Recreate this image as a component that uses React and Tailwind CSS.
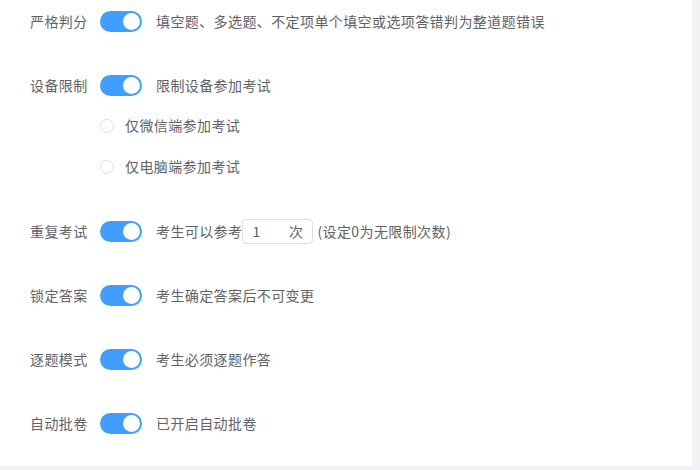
import React from 'react';

const font = { fontFamily: '"Microsoft YaHei", "Noto Sans CJK SC", sans-serif' };

const Toggle = () => (
  <span className="relative inline-block w-[42px] h-[21px] rounded-full bg-[#409eff] shrink-0">
    <span className="absolute right-[2px] top-[2px] w-[17px] h-[17px] rounded-full bg-white" />
  </span>
);

const Radio = ({ label }) => (
  <div className="flex items-center h-[41px] pl-[100px]">
    <span className="w-[14px] h-[14px] rounded-full border border-[#dcdfe6] bg-white" />
    <span className="ml-[11px] text-[14px] text-[#606266]">{label}</span>
  </div>
);

const Label = ({ children }) => (
  <span className="w-[100px] pl-[30px] text-[14px] text-[#606266] shrink-0 whitespace-nowrap">{children}</span>
);

const Row = ({ label, children, last }) => (
  <div className={`flex items-center h-[40px] ${last ? '' : 'mb-6'}`}>
    <Label>{label}</Label>
    <Toggle />
    <div className="ml-[14px] flex items-center text-[14px] text-[#606266] whitespace-nowrap">{children}</div>
  </div>
);

export default function App() {
  return (
    <div className="w-[700px] h-[470px] bg-[#f0f2f5] overflow-hidden tracking-[0.4px]" style={font}>
      <div className="w-[692px] h-[466px] bg-white pt-px">
        <Row label="严格判分">填空题、多选题、不定项单个填空或选项答错判为整道题错误</Row>
        <div className="flex items-center h-[40px]">
          <Label>设备限制</Label>
          <Toggle />
          <span className="ml-[14px] text-[14px] text-[#606266]">限制设备参加考试</span>
        </div>
        <div className="mb-6">
          <Radio label="仅微信端参加考试" />
          <Radio label="仅电脑端参加考试" />
        </div>
        <Row label="重复考试">
          <span>考生可以参考</span>
          <span className="flex items-center justify-between w-[71px] h-[25px] border border-[#dcdfe6] rounded-[4px] px-[9px]">
            <span>1</span>
            <span>次</span>
          </span>
          <span className="ml-[4px]">(设定0为无限制次数)</span>
        </Row>
        <Row label="锁定答案">考生确定答案后不可变更</Row>
        <Row label="逐题模式">考生必须逐题作答</Row>
        <Row label="自动批卷" last>已开启自动批卷</Row>
      </div>
    </div>
  );
}
